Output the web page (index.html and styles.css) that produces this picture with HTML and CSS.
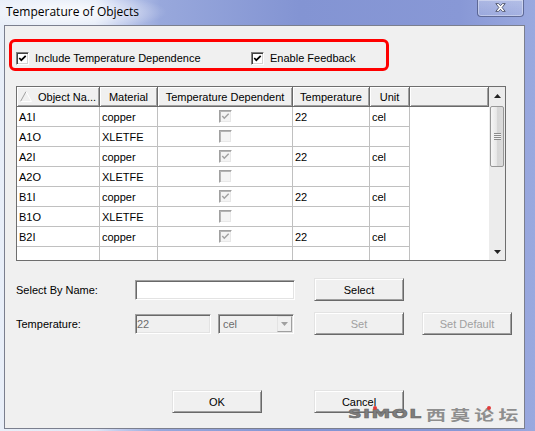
FILE: index.html
```html
<!DOCTYPE html>
<html>
<head>
<meta charset="utf-8">
<title>Temperature of Objects</title>
<link rel="stylesheet" href="styles.css">
</head>
<body>
<div class="win">
  <div class="titlebar">
    <span class="title">Temperature of Objects</span>
    <div class="close">
      <svg width="11" height="9" viewBox="0 0 11 9"><path d="M0.8 0.6 L3.6 0.6 L5.5 2.7 L7.4 0.6 L10.2 0.6 L7.1 4.5 L10.2 8.4 L7.4 8.4 L5.5 6.3 L3.6 8.4 L0.8 8.4 L3.9 4.5 Z" fill="#fff" stroke="#3a3f55" stroke-width="0.8" stroke-linejoin="round"/></svg>
    </div>
  </div>
  <div class="frame">
    <div class="client">
      <div class="opts">
        <div class="opt opt-first">
          <span class="cb"><svg width="11" height="11" viewBox="0 0 11 11"><path d="M2.3 5 L4.3 7.2 L8.7 2.8" fill="none" stroke="#000" stroke-width="1.7"/></svg></span>
          <span>Include Temperature Dependence</span>
        </div>
        <div class="opt">
          <span class="cb"><svg width="11" height="11" viewBox="0 0 11 11"><path d="M2.3 5 L4.3 7.2 L8.7 2.8" fill="none" stroke="#000" stroke-width="1.7"/></svg></span>
          <span>Enable Feedback</span>
        </div>
      </div>

      <div class="lv">
        <div class="lv-main">
          <div class="lv-head">
            <div class="hc c1"><svg class="sort" width="12" height="11" viewBox="0 0 12 11"><path d="M0.5 10.5 L6 0.5" fill="none" stroke="#a0a0a0"/><path d="M6 0.5 L11.5 10.5 L0.5 10.5" fill="none" stroke="#fff"/></svg><span>Object Na...</span></div>
            <div class="hc">Material</div>
            <div class="hc">Temperature Dependent</div>
            <div class="hc">Temperature</div>
            <div class="hc">Unit</div>
            <div class="hc rest"></div>
          </div>
          <div class="lv-row">
            <div class="cell">A1I</div><div class="cell">copper</div>
            <div class="cell mid"><span class="cb cb-dis"><svg width="11" height="11" viewBox="0 0 11 11"><path d="M2.3 5 L4.3 7.2 L8.7 2.8" fill="none" stroke="#a2a2a2" stroke-width="1.5"/></svg></span></div>
            <div class="cell">22</div><div class="cell">cel</div><div class="cell rest"></div>
          </div>
          <div class="lv-row">
            <div class="cell">A1O</div><div class="cell">XLETFE</div>
            <div class="cell mid"><span class="cb cb-dis"></span></div>
            <div class="cell"></div><div class="cell"></div><div class="cell rest"></div>
          </div>
          <div class="lv-row">
            <div class="cell">A2I</div><div class="cell">copper</div>
            <div class="cell mid"><span class="cb cb-dis"><svg width="11" height="11" viewBox="0 0 11 11"><path d="M2.3 5 L4.3 7.2 L8.7 2.8" fill="none" stroke="#a2a2a2" stroke-width="1.5"/></svg></span></div>
            <div class="cell">22</div><div class="cell">cel</div><div class="cell rest"></div>
          </div>
          <div class="lv-row">
            <div class="cell">A2O</div><div class="cell">XLETFE</div>
            <div class="cell mid"><span class="cb cb-dis"></span></div>
            <div class="cell"></div><div class="cell"></div><div class="cell rest"></div>
          </div>
          <div class="lv-row">
            <div class="cell">B1I</div><div class="cell">copper</div>
            <div class="cell mid"><span class="cb cb-dis"><svg width="11" height="11" viewBox="0 0 11 11"><path d="M2.3 5 L4.3 7.2 L8.7 2.8" fill="none" stroke="#a2a2a2" stroke-width="1.5"/></svg></span></div>
            <div class="cell">22</div><div class="cell">cel</div><div class="cell rest"></div>
          </div>
          <div class="lv-row">
            <div class="cell">B1O</div><div class="cell">XLETFE</div>
            <div class="cell mid"><span class="cb cb-dis"></span></div>
            <div class="cell"></div><div class="cell"></div><div class="cell rest"></div>
          </div>
          <div class="lv-row">
            <div class="cell">B2I</div><div class="cell">copper</div>
            <div class="cell mid"><span class="cb cb-dis"><svg width="11" height="11" viewBox="0 0 11 11"><path d="M2.3 5 L4.3 7.2 L8.7 2.8" fill="none" stroke="#a2a2a2" stroke-width="1.5"/></svg></span></div>
            <div class="cell">22</div><div class="cell">cel</div><div class="cell rest"></div>
          </div>
          <div class="lv-row">
            <div class="cell"></div><div class="cell"></div><div class="cell"></div>
            <div class="cell"></div><div class="cell"></div><div class="cell rest"></div>
          </div>
        </div>
        <div class="vscroll">
          <div class="sb-btn"><svg width="7" height="4" viewBox="0 0 7 4"><path d="M3.5 0 L7 4 L0 4 Z" fill="#222"/></svg></div>
          <div class="sb-track">
            <div class="sb-thumb"><span class="grip"></span></div>
          </div>
          <div class="sb-btn"><svg width="7" height="4" viewBox="0 0 7 4"><path d="M0 0 L7 0 L3.5 4 Z" fill="#222"/></svg></div>
        </div>
      </div>

      <div class="form">
        <span class="lbl">Select By Name:</span>
        <div class="field field-name"></div>
        <button class="btn">Select</button>
        <span></span>

        <span class="lbl">Temperature:</span>
        <div class="pair">
          <div class="field field-dis">22</div>
          <div class="field field-dis combo"><span>cel</span><span class="dd"><svg width="7" height="4" viewBox="0 0 7 4"><path d="M0 0 L7 0 L3.5 4 Z" fill="#a0a0a0"/></svg></span></div>
        </div>
        <button class="btn btn-dis">Set</button>
        <button class="btn btn-dis">Set Default</button>
      </div>

      <div class="actions">
        <button class="btn">OK</button>
        <button class="btn">Cancel</button>
      </div>

      <div class="annot"></div>
      <div class="wm">
        <span class="wm-en">SIMOL</span><span class="wm-cn">西莫论坛</span>
        <span class="dot dot-1"></span><span class="dot dot-2"></span>
      </div>
    </div>
  </div>
</div>
</body>
</html>
```

FILE: styles.css
```css
html, body {
  margin: 0;
  padding: 0;
}
body {
  width: 535px;
  height: 431px;
  overflow: hidden;
  font-family: "Liberation Sans", Arial, sans-serif;
  font-size: 11px;
  color: #000;
  background: linear-gradient(90deg, #e9eff9 0, #e0e8f6 95px, #c2cdee 118px, #98a8dc 160px, #8394d3 300px, #8898d6 460px, #9aa9df 535px);
}
.win {
  display: flex;
  flex-direction: column;
}
.titlebar {
  height: 25px;
  display: flex;
  align-items: flex-start;
  background: radial-gradient(ellipse 95px 18px at 72px 12px, rgba(255,255,255,0.9), rgba(255,255,255,0) );
}
.title {
  font-family: "Open Sans", "Liberation Sans", sans-serif;
  font-size: 12px;
  line-height: 24px;
  padding-left: 6px;
  color: #000;
}
.close {
  margin-left: auto;
  margin-right: 11px;
  width: 47px;
  height: 17px;
  box-sizing: border-box;
  border: 1px solid rgba(45, 55, 100, 0.6);
  border-top: none;
  border-radius: 0 0 4px 4px;
  background: linear-gradient(rgba(255,255,255,0.28), rgba(255,255,255,0.12));
  box-shadow: inset 0 0 0 1px rgba(255,255,255,0.35);
  display: flex;
  justify-content: center;
  padding-top: 3px;
}
.close svg { display: block; }
.frame {
  display: flex;
  padding-left: 4px;
}
.client {
  position: relative;
  width: 521px;
  height: 404px;
  box-sizing: border-box;
  border: 1px solid #7b7f8e;
  background: #f0f0f0;
}

/* option checkboxes */
.opts {
  display: flex;
  margin-top: 26px;
  padding-left: 11px;
  height: 13px;
}
.opt {
  display: flex;
  align-items: center;
  gap: 6px;
  line-height: 13px;
  white-space: nowrap;
}
.opt-first { width: 235px; }
.cb {
  display: block;
  flex: none;
  width: 13px;
  height: 13px;
  box-sizing: border-box;
  border: 1px solid;
  border-color: #808080 #ffffff #ffffff #808080;
  box-shadow: inset 1px 1px #404040, inset -1px -1px #d4d4d4;
  background: #fff;
}
.cb svg { display: block; }
.cb-dis {
  background: #f4f4f4;
  border-color: #a0a0a0 #ffffff #ffffff #a0a0a0;
  box-shadow: inset 1px 1px #b4b4b4, inset -1px -1px #e8e8e8;
}

/* list view */
.lv {
  margin: 21px 0 0 11px;
  width: 490px;
  height: 175px;
  box-sizing: border-box;
  border: 1px solid #6e6e6e;
  display: flex;
  background: #fff;
}
.lv-main {
  flex: 1;
  overflow: hidden;
}
.lv-head, .lv-row {
  display: grid;
  grid-template-columns: 83px 58px 135px 77px 40px 1fr;
}
.hc {
  height: 20px;
  box-sizing: border-box;
  background: #f0f0f0;
  border-right: 1px solid #696969;
  border-bottom: 1px solid #696969;
  box-shadow: inset 1px 1px #ffffff, inset -1px -1px #a0a0a0;
  display: flex;
  align-items: center;
  justify-content: center;
  white-space: nowrap;
  overflow: hidden;
}
.hc.c1 {
  justify-content: flex-start;
  padding-left: 3px;
  gap: 6px;
}
.sort { display: block; flex: none; }
.cell {
  height: 20px;
  box-sizing: border-box;
  border-right: 1px solid #c0c0c0;
  border-bottom: 1px solid #c0c0c0;
  padding-left: 2px;
  display: flex;
  align-items: center;
  white-space: nowrap;
  overflow: hidden;
}
.cell.mid { justify-content: center; padding-left: 0; }
.cell.rest { border: none; }

.vscroll {
  width: 16px;
  flex: none;
  display: flex;
  flex-direction: column;
  background: #ececec;
}
.sb-btn {
  height: 17px;
  flex: none;
  display: flex;
  align-items: center;
  justify-content: center;
}
.sb-btn svg { display: block; }
.sb-track {
  flex: 1;
  padding-top: 2px;
}
.sb-thumb {
  margin: 0 1px;
  height: 61px;
  box-sizing: border-box;
  border: 1px solid #979797;
  border-radius: 2px;
  background: linear-gradient(90deg, #f6f6f6, #e8e8e8 45%, #d6d6d6 55%, #dcdcdc);
  display: flex;
  align-items: center;
  justify-content: center;
}
.grip {
  width: 7px;
  height: 7px;
  background: repeating-linear-gradient(180deg, #8c8c8c 0 1px, #f2f2f2 1px 2px);
}

/* form */
.form {
  display: grid;
  grid-template-columns: 119px 179px 108px 90px;
  grid-auto-rows: 23px;
  row-gap: 11px;
  align-items: center;
  margin: 17px 0 0 11px;
}
.lbl { white-space: nowrap; }
.field {
  height: 20px;
  box-sizing: border-box;
  border: 1px solid;
  border-color: #a0a0a0 #ffffff #ffffff #a0a0a0;
  box-shadow: inset 1px 1px #696969, inset -1px -1px #e3e3e3;
  background: #fff;
}
.field-name { width: 160px; }
.pair {
  display: flex;
  gap: 7px;
}
.field-dis {
  width: 76px;
  background: #f0f0f0;
  color: #6d6d6d;
  display: flex;
  align-items: center;
  padding-left: 1px;
}
.combo { padding-left: 4px; }
.dd {
  margin-left: auto;
  margin-right: 1px;
  width: 15px;
  height: 16px;
  box-sizing: border-box;
  border: 1px solid;
  border-color: #e3e3e3 #a0a0a0 #a0a0a0 #e3e3e3;
  background: #f0f0f0;
  display: flex;
  align-items: center;
  justify-content: center;
}
.dd svg { display: block; }
.btn {
  width: 90px;
  height: 23px;
  box-sizing: border-box;
  margin: 0;
  padding: 0;
  background: #f0f0f0;
  border: 1px solid;
  border-color: #e3e3e3 #696969 #696969 #e3e3e3;
  box-shadow: inset 1px 1px #ffffff, inset -1px -1px #a0a0a0;
  border-radius: 0;
  font-family: "Liberation Sans", Arial, sans-serif;
  font-size: 11px;
  color: #000;
  display: flex;
  align-items: center;
  justify-content: center;
}
.btn-dis { color: #a0a0a0; }

.actions {
  display: flex;
  gap: 52px;
  margin: 55px 0 0 167px;
}

/* annotation overlay */
.annot {
  position: absolute;
  left: 4px;
  top: 13px;
  width: 380px;
  height: 32px;
  box-sizing: border-box;
  border: 3px solid #ff0000;
  border-radius: 6px;
}

/* watermark overlay */
.wm {
  position: absolute;
  left: 343px;
  top: 380px;
  height: 16px;
  display: flex;
  align-items: center;
  white-space: nowrap;
}
.wm-en {
  display: inline-block;
  width: 52px;
  margin-right: 26px;
  font-family: "DejaVu Sans", sans-serif;
  font-weight: bold;
  font-size: 13px;
  line-height: 16px;
  letter-spacing: 1px;
  transform: scaleX(1.45);
  transform-origin: left center;
  -webkit-text-stroke: 0.6px #6a6a6a;
  color: #7d7d7d;
}
.wm-cn {
  display: inline-block;
  font-family: "Noto Sans CJK SC", sans-serif;
  font-weight: bold;
  font-size: 14px;
  line-height: 16px;
  letter-spacing: 3px;
  transform: scaleX(1.42);
  transform-origin: left center;
  color: #8e8e8e;
}
.dot {
  position: absolute;
  width: 4px;
  height: 4px;
  border-radius: 50%;
  background: #e23a3a;
}
.dot-1 { left: 25px; top: 0; }
.dot-2 { left: 139px; top: 0; }
```
